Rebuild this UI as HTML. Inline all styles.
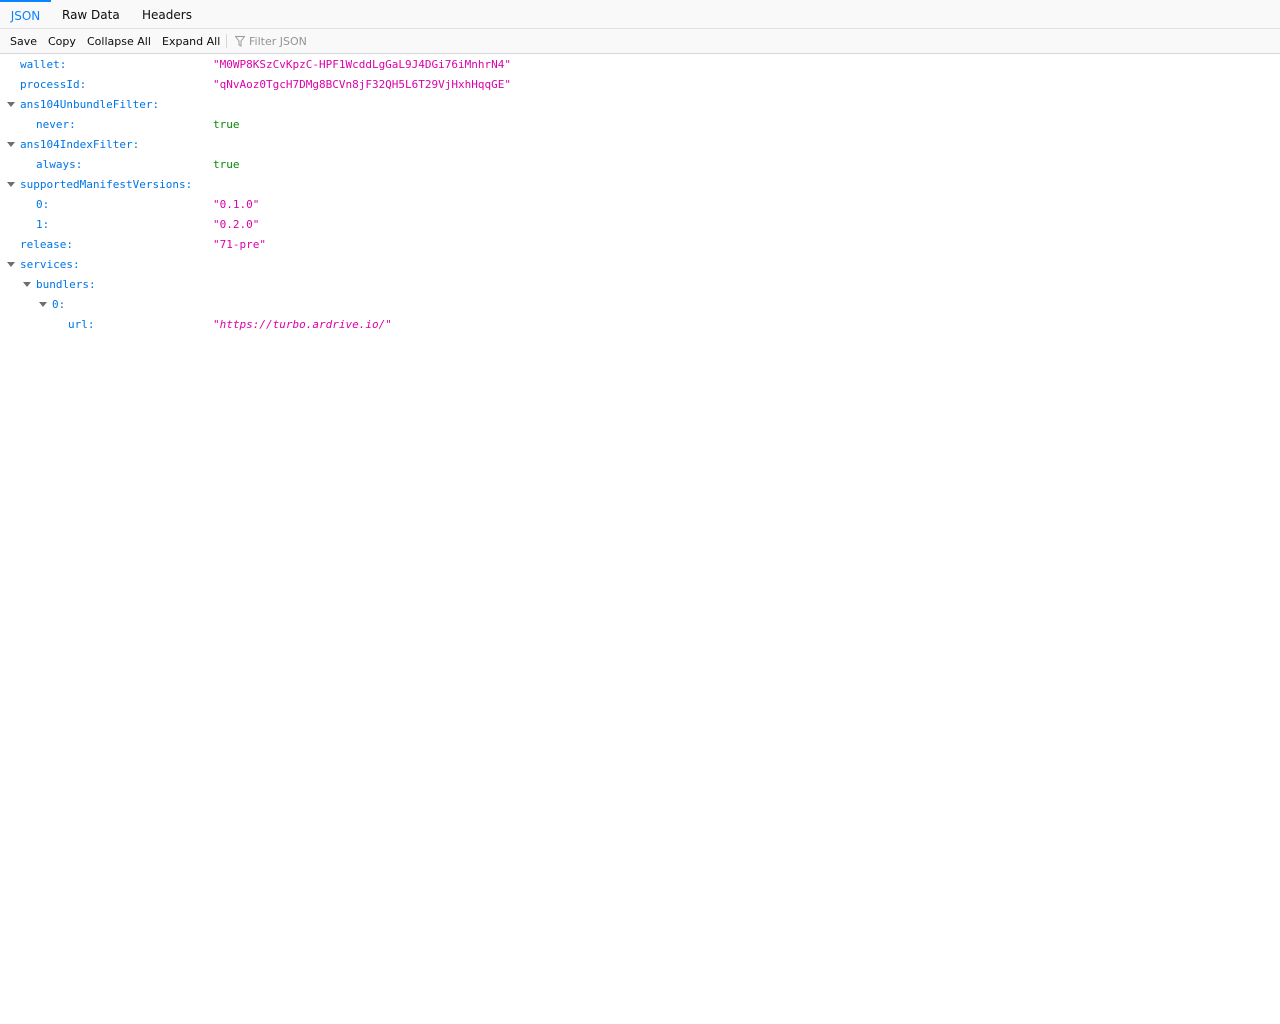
<!DOCTYPE html>
<html><head><style>
body{margin:0;background:#fff;font-family:"DejaVu Sans",sans-serif;}
.tabs{height:28px;background:#f9f9fa;border-bottom:1px solid #e0e0e2;position:relative;font-size:12px;color:#0c0c0d}
.tab{position:absolute;top:0;height:28px;line-height:30px}
.sel{color:#0a84ff;border-top:2px solid #0a84ff;height:26px;line-height:28px}
.tb{height:24px;border-bottom:1px solid #d7d7db;font-size:11px;color:#0c0c0d;position:relative;background:#f9f9fa}
.tb span{position:absolute;top:0;line-height:25px}
.row{position:absolute;height:20px;line-height:20px;font-family:"DejaVu Sans Mono",monospace;font-size:11px;white-space:pre}
.k{color:#0074e8}.s{color:#dd00a9}.b{color:#058b00}
.tw{display:inline-block;width:0;height:0;border-left:4px solid transparent;border-right:4px solid transparent;border-top:5px solid #6e6e75;margin-right:5px;vertical-align:1px}
</style></head><body>
<div class="tabs">
<div class="tab sel" style="left:0;width:51px;text-align:center">JSON</div>
<div class="tab" style="left:62px">Raw Data</div>
<div class="tab" style="left:142px">Headers</div>
</div>
<div class="tb">
<span style="left:10px">Save</span><span style="left:48px">Copy</span><span style="left:87px">Collapse All</span><span style="left:162px">Expand All</span>
<span style="left:226px;top:5px;height:14px;border-left:1px solid #d7d7db"></span>
<svg style="position:absolute;left:235px;top:7px" width="10" height="11" viewBox="0 0 10 11"><path d="M0.5 0.5h9L6 5v5L4 9V5z" fill="none" stroke="#999" stroke-width="1"/></svg>
<span style="left:249px;color:#949494">Filter JSON</span>
</div>
<div class="row k" style="left:20px;top:55px">wallet:</div><div class="row s" style="left:213px;top:55px">"M0WP8KSzCvKpzC-HPF1WcddLgGaL9J4DGi76iMnhrN4"</div>
<div class="row k" style="left:20px;top:75px">processId:</div><div class="row s" style="left:213px;top:75px">"qNvAoz0TgcH7DMg8BCVn8jF32QH5L6T29VjHxhHqqGE"</div>
<div class="row k" style="left:7px;top:95px"><i class="tw"></i>ans104UnbundleFilter:</div>
<div class="row k" style="left:36px;top:115px">never:</div><div class="row b" style="left:213px;top:115px">true</div>
<div class="row k" style="left:7px;top:135px"><i class="tw"></i>ans104IndexFilter:</div>
<div class="row k" style="left:36px;top:155px">always:</div><div class="row b" style="left:213px;top:155px">true</div>
<div class="row k" style="left:7px;top:175px"><i class="tw"></i>supportedManifestVersions:</div>
<div class="row k" style="left:36px;top:195px">0:</div><div class="row s" style="left:213px;top:195px">"0.1.0"</div>
<div class="row k" style="left:36px;top:215px">1:</div><div class="row s" style="left:213px;top:215px">"0.2.0"</div>
<div class="row k" style="left:20px;top:235px">release:</div><div class="row s" style="left:213px;top:235px">"71-pre"</div>
<div class="row k" style="left:7px;top:255px"><i class="tw"></i>services:</div>
<div class="row k" style="left:23px;top:275px"><i class="tw"></i>bundlers:</div>
<div class="row k" style="left:39px;top:295px"><i class="tw"></i>0:</div>
<div class="row k" style="left:68px;top:315px">url:</div><div class="row s" style="left:213px;top:315px;font-style:italic">"https://turbo.ardrive.io/"</div>
</body></html>
